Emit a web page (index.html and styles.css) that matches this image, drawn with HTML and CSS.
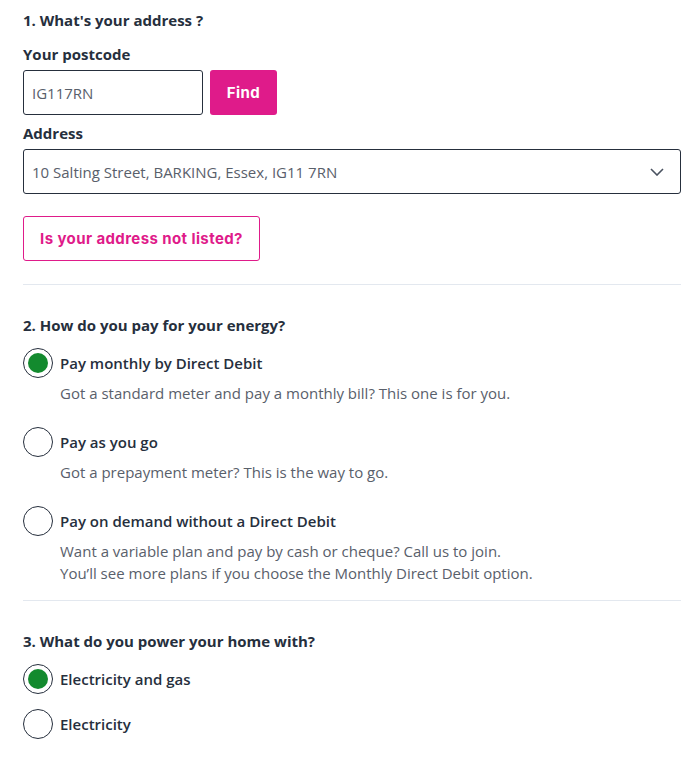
FILE: index.html
```html
<!DOCTYPE html>
<html lang="en">
<head>
<meta charset="UTF-8">
<meta name="viewport" content="width=device-width, initial-scale=1.0">
<title>Get a quote</title>
<link rel="stylesheet" href="styles.css">
</head>
<body>

<div class="form">

  <!-- 1. Address -->
  <section class="step">
    <h2 class="step-title">1. What's your address ?</h2>
    <label class="field-label" for="postcode">Your postcode</label>
    <div class="postcode-row">
      <input type="text" id="postcode" class="input postcode" value="IG117RN">
      <button class="btn btn-primary">Find</button>
    </div>
    <label class="field-label" for="address">Address</label>
    <div class="select">
      <span class="select-value" id="address">10 Salting Street, BARKING, Essex, IG11 7RN</span>
      <svg class="chevron" width="14" height="8" viewBox="0 0 14 8"><path d="M1 1l6 6 6-6" fill="none" stroke="#4a5260" stroke-width="1.6"/></svg>
    </div>
    <button class="btn btn-outline">Is your address not listed?</button>
  </section>

  <hr class="divider">

  <!-- 2. Payment -->
  <section class="step">
    <h2 class="step-title">2. How do you pay for your energy?</h2>
    <div class="options">
      <div class="option">
        <span class="radio checked"></span>
        <div class="option-body">
          <div class="option-label">Pay monthly by Direct Debit</div>
          <div class="option-desc">Got a standard meter and pay a monthly bill? This one is for you.</div>
        </div>
      </div>
      <div class="option">
        <span class="radio"></span>
        <div class="option-body">
          <div class="option-label">Pay as you go</div>
          <div class="option-desc">Got a prepayment meter? This is the way to go.</div>
        </div>
      </div>
      <div class="option">
        <span class="radio"></span>
        <div class="option-body">
          <div class="option-label">Pay on demand without a Direct Debit</div>
          <div class="option-desc">Want a variable plan and pay by cash or cheque? Call us to join.<br>You’ll see more plans if you choose the Monthly Direct Debit option.</div>
        </div>
      </div>
    </div>
  </section>

  <hr class="divider tight">

  <!-- 3. Fuel -->
  <section class="step">
    <h2 class="step-title">3. What do you power your home with?</h2>
    <div class="options compact">
      <div class="option">
        <span class="radio checked"></span>
        <div class="option-label">Electricity and gas</div>
      </div>
      <div class="option">
        <span class="radio"></span>
        <div class="option-label">Electricity</div>
      </div>
    </div>
  </section>

</div>

</body>
</html>
```

FILE: styles.css
```css
body {
  margin: 0;
  font-family: 'Open Sans', sans-serif;
  color: #262f3d;
  background: #fff;
}
.form {
  padding: 9px 15px 0 23px;
}
.step-title {
  font-size: 15px;
  font-weight: 700;
  margin: 0 0 12px;
  line-height: 22px;
}
.field-label {
  display: block;
  font-size: 15px;
  font-weight: 700;
  line-height: 22px;
  margin-bottom: 5px;
}
.postcode-row {
  display: flex;
  gap: 7px;
  margin-bottom: 7px;
}
.input {
  box-sizing: border-box;
  height: 45px;
  border: 1px solid #262f3d;
  border-radius: 3px;
  padding: 0 8px;
  font-family: 'Open Sans', sans-serif;
  font-size: 15px;
  color: #59606b;
}
.postcode {
  width: 180px;
}
.btn {
  box-sizing: border-box;
  height: 45px;
  border-radius: 3px;
  font-family: Inter, 'Liberation Sans', sans-serif;
  font-weight: 700;
  font-size: 15px;
  letter-spacing: 0.4px;
  cursor: pointer;
}
.btn-primary {
  width: 67px;
  background: #df1b8a;
  color: #fff;
  border: none;
}
.btn-outline {
  display: block;
  width: 237px;
  margin-top: 22px;
  background: #fff;
  color: #df1b8a;
  border: 1px solid #df1b8a;
}
.select {
  box-sizing: border-box;
  height: 45px;
  border: 1px solid #262f3d;
  border-radius: 3px;
  display: flex;
  align-items: center;
  justify-content: space-between;
  padding: 0 16px 0 8px;
  font-size: 15px;
  color: #59606b;
}
.divider {
  border: none;
  border-top: 1px solid #e3e8ef;
  margin: 23px 0 29px;
}
.divider.tight {
  margin-top: 16px;
}
.options {
  display: flex;
  flex-direction: column;
  gap: 23px;
}
.options.compact {
  gap: 15px;
}
.option {
  display: flex;
  gap: 7px;
  align-items: flex-start;
}
.compact .option {
  align-items: center;
}
.radio {
  box-sizing: border-box;
  flex: none;
  width: 30px;
  height: 30px;
  border: 1.5px solid #262f3d;
  border-radius: 50%;
  display: flex;
  align-items: center;
  justify-content: center;
}
.radio.checked::after {
  content: "";
  width: 20px;
  height: 20px;
  border-radius: 50%;
  background: #138a2e;
}
.option-label {
  font-size: 15px;
  font-weight: 600;
  line-height: 30px;
}
.option-desc {
  font-size: 15px;
  color: #59606b;
  line-height: 22px;
  margin-top: 4px;
}
```
